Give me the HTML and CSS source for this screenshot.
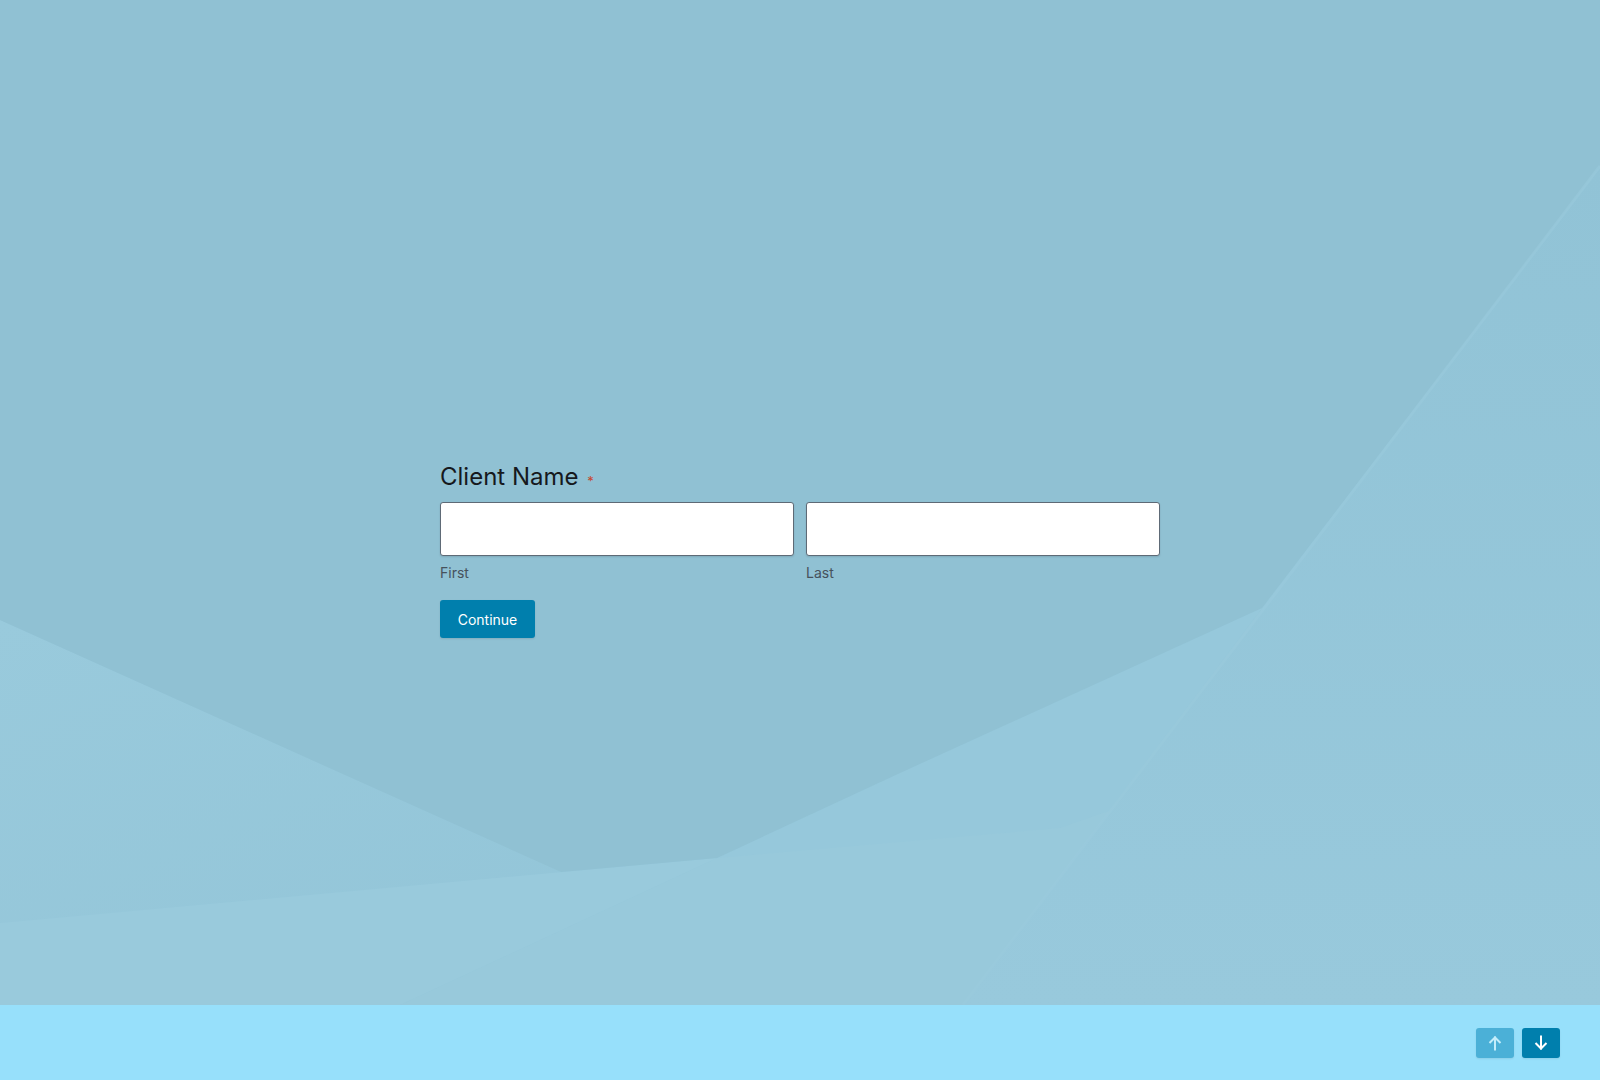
FILE: index.html
```html
<!DOCTYPE html>
<html lang="en">
<head>
<meta charset="utf-8">
<title>Client Name</title>
<link rel="stylesheet" href="styles.css">
</head>
<body>
<main class="stage">
  <svg class="backdrop" viewBox="0 0 1600 1005" preserveAspectRatio="none" aria-hidden="true">
    <defs>
      <linearGradient id="gRight" x1="0" y1="0" x2="0" y2="1">
        <stop offset="0" stop-color="#91c3d6"/>
        <stop offset="1" stop-color="#98c9dc"/>
      </linearGradient>
      <linearGradient id="gLeft" x1="0" y1="0" x2="1" y2="1">
        <stop offset="0" stop-color="#99cadc"/>
        <stop offset="1" stop-color="#93c5d8"/>
      </linearGradient>
    </defs>
    <rect x="0" y="0" width="1600" height="1005" fill="#95c7da"/>
    <polygon points="0,620 561,872 717,858 0,923" fill="url(#gLeft)"/>
    <polygon points="717,858 900,773 1262,608 963,1005 400,1005" fill="#96c8db"/>
    <polygon points="717,858 1060,828 1140,800 1000,1005 400,1005" fill="#98c9db"/>
    <polygon points="0,923 717,858 400,1005 0,1005" fill="#99cadc"/>
    <polygon points="1600,166 1600,1005 963,1005 1262,608" fill="url(#gRight)"/>
    <polygon points="0,0 1600,0 1600,166 1262,608 900,773 717,858 561,872 0,620" fill="#90c1d3"/>
    <line x1="1600" y1="166" x2="963" y2="1005" stroke="#9bcbdd" stroke-width="3" opacity="0.5"/>
  </svg>

  <form class="form">
    <h1 class="question">Client Name <span class="req">*</span></h1>
    <div class="name-row">
      <label class="field">
        <input class="input" type="text">
        <span class="sublabel">First</span>
      </label>
      <label class="field">
        <input class="input" type="text">
        <span class="sublabel">Last</span>
      </label>
    </div>
    <button class="continue" type="button">Continue</button>
  </form>
</main>

<footer class="footer">
  <div class="nav">
    <button class="nav-btn up" type="button" aria-label="Previous">
      <svg width="16" height="16" viewBox="0 0 16 16" fill="none" stroke="currentColor" stroke-width="2" stroke-linecap="square">
        <path d="M8 14.5V2.5"/>
        <path d="M2.5 8L8 2.5L13.5 8" stroke-linecap="butt"/>
      </svg>
    </button>
    <button class="nav-btn down" type="button" aria-label="Next">
      <svg width="16" height="16" viewBox="0 0 16 16" fill="none" stroke="currentColor" stroke-width="2" stroke-linecap="square">
        <path d="M8 1.5V13.5"/>
        <path d="M2.5 8L8 13.5L13.5 8" stroke-linecap="butt"/>
      </svg>
    </button>
  </div>
</footer>
</body>
</html>
```

FILE: styles.css
```css
* { box-sizing: border-box; }

html, body {
  margin: 0;
  padding: 0;
}

body {
  width: 1600px;
  height: 1080px;
  overflow: hidden;
  font-family: Inter, "Noto Sans", "Liberation Sans", sans-serif;
  background: #97e0fb;
}

.stage {
  position: relative;
  height: 1005px;
  display: flex;
  justify-content: center;
  padding-top: 462px;
  overflow: hidden;
}

.backdrop {
  position: absolute;
  inset: 0;
  width: 100%;
  height: 100%;
  z-index: 0;
}

.form {
  position: relative;
  z-index: 1;
  width: 720px;
  display: flex;
  flex-direction: column;
  align-items: flex-start;
}

.question {
  margin: 0;
  font-size: 24px;
  line-height: 30px;
  font-weight: 400;
  color: #16191d;
}

.req {
  display: inline-block;
  margin-left: 2px;
  font-size: 13px;
  line-height: 13px;
  color: #c8452c;
  vertical-align: -1px;
}

.name-row {
  margin-top: 10px;
  width: 100%;
  display: grid;
  grid-template-columns: 1fr 1fr;
  gap: 12px;
}

.field {
  display: flex;
  flex-direction: column;
}

.input {
  height: 54px;
  width: 100%;
  margin: 0;
  border: 1px solid #5e6a76;
  border-radius: 3px;
  background: #ffffff;
  box-shadow: 0 1px 2px rgba(0, 0, 0, 0.12);
  font-family: inherit;
  font-size: 16px;
  padding: 0 12px;
}

.sublabel {
  margin-top: 7px;
  font-size: 14px;
  line-height: 20px;
  color: #46525c;
}

.continue {
  margin-top: 17px;
  height: 38px;
  width: 95px;
  padding: 0;
  border: 0;
  border-radius: 3px;
  background: #007fad;
  color: #ffffff;
  font-family: inherit;
  font-size: 14px;
  font-weight: 400;
  box-shadow: 0 1px 2px rgba(0, 0, 0, 0.1);
}

.footer {
  height: 75px;
  background: #97e0fb;
  display: flex;
  justify-content: flex-end;
  align-items: center;
  padding: 0 40px 0 0;
}

.nav {
  display: flex;
  gap: 8px;
  margin-top: 1px;
}

.nav-btn {
  width: 38px;
  height: 30px;
  padding: 0;
  border: 0;
  border-radius: 3px;
  display: flex;
  align-items: center;
  justify-content: center;
  box-shadow: 0 1px 2px rgba(0, 0, 0, 0.08);
}

.nav-btn.up {
  background: #4bb0d7;
  color: #c3edfb;
}

.nav-btn.down {
  background: #007fad;
  color: #ffffff;
}
```
